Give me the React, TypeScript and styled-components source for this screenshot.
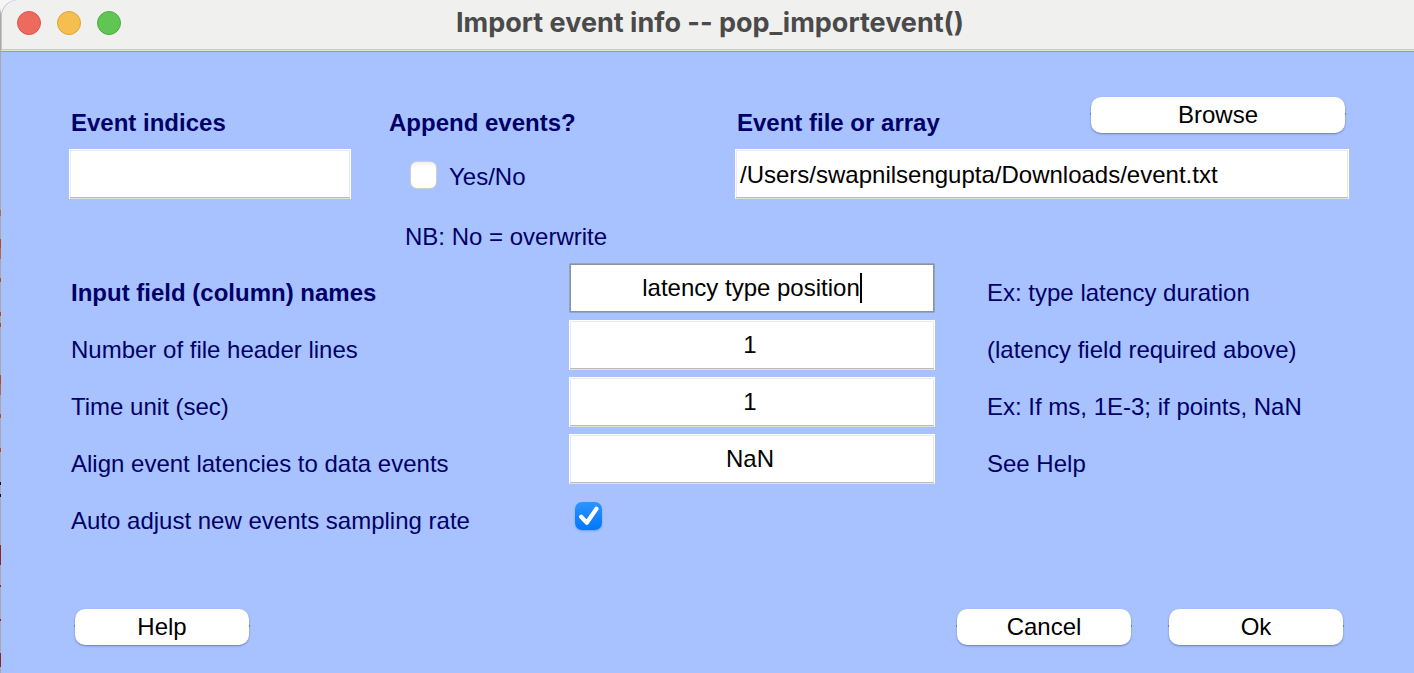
import React, { useState } from "react";
import styled, { createGlobalStyle, css } from "styled-components";

const navy = "#000066";

const GlobalStyle = createGlobalStyle`
  *, *::before, *::after { box-sizing: border-box; }
  body {
    margin: 0;
    background: #f6f6f6;
    font-family: "Liberation Sans", Arial, Helvetica, sans-serif;
    font-size: 24px;
    line-height: 28px;
  }
  input, button { font: inherit; color: #000; }
`;

const Desktop = styled.div`
  min-height: 100vh;
  display: flex;
  padding-left: 1px;
  background:
    linear-gradient(transparent 210px, #b3693f 210px 216px, transparent 216px 239px, #b84a10 239px 248px, #b3693f 248px 259px,
      transparent 259px 278px, #b84a10 278px 282px, transparent 282px 312px, #b84a10 312px 316px, transparent 316px 323px,
      #b84a10 323px 327px, transparent 327px 375px, #b84a10 375px 384px, #b3693f 384px 395px, transparent 395px 414px,
      #b84a10 414px 418px, transparent 418px 448px, #b84a10 448px 452px, transparent 452px 482px, #111 482px 485px,
      transparent 485px 494px, #111 494px 497px, transparent 497px 545px, #8f2424 545px 565px, transparent 565px 585px,
      #8f2424 585px 587px, transparent 587px 619px, #8f2424 619px 621px, transparent 621px 653px, #8f2424 653px 667px, transparent 667px)
      left top / 1px 100% no-repeat,
    linear-gradient(#f6f6f6 8px, #a9a9a9 14px) left top / 1px 100% no-repeat,
    #f6f6f6;
`;

const Window = styled.main`
  flex: 1;
  min-width: 0;
  display: flex;
  flex-direction: column;
  background: #a8c2ff;
  border-top-left-radius: 16px;
  overflow: hidden;
`;

const TitleBar = styled.header`
  display: grid;
  grid-template-columns: 1fr auto 1fr;
  align-items: center;
  height: 51px;
  padding: 0 11px 5px 16px;
  background: #f0f0ee;
  border-bottom: 1px solid #e4e4da;
  border-top-left-radius: 16px;
  box-shadow: inset 1px 0 #c4c4c4, inset 0 -1px #c8c8c6, 0 1px #8199d6;
`;

const Lights = styled.div`
  display: flex;
  gap: 16px;
`;

const Light = styled.button<{ $fill: string; $edge: string }>`
  width: 24px;
  height: 24px;
  padding: 0;
  border-radius: 50%;
  background: ${(p) => p.$fill};
  border: 1px solid ${(p) => p.$edge};
`;

const Title = styled.h1`
  margin: 0;
  font-family: Inter, "Open Sans", sans-serif;
  font-size: 27px;
  font-weight: 700;
  line-height: 32px;
  color: #4a4a4a;
`;

const Form = styled.form`
  flex: 1;
  display: flex;
  flex-direction: column;
  padding: 46px 65px 28px 68px;
  color: ${navy};
`;

const TopGrid = styled.section`
  display: grid;
  grid-template-columns: 282fr 308fr 614fr;
  column-gap: 38px;
`;

const Column = styled.div`
  min-width: 0;
`;

const ColumnHead = styled.div`
  display: flex;
  justify-content: space-between;
  align-items: flex-end;
  height: 40px;
  margin-bottom: 12px;
`;

const Heading = styled.label<{ $inset?: boolean }>`
  font-weight: 700;
  white-space: nowrap;
  padding-left: ${(p) => (p.$inset ? 2 : 0)}px;
`;

const PushButton = styled.button<{ $wide?: boolean }>`
  position: relative;
  width: ${(p) => (p.$wide ? 254 : 174)}px;
  height: 36px;
  padding: 0;
  border: 0;
  border-radius: 10px;
  background: #fff;
  box-shadow: 0 1px 2px rgba(40, 60, 130, 0.5);

  &::before, &::after {
    content: "";
    position: absolute;
    top: 16px;
    width: 1px;
    height: 2px;
    background: #6b7fb5;
  }
  &::before { left: -1px; }
  &::after { right: -1px; }
`;

const BrowseButton = styled(PushButton)`
  align-self: flex-start;
  margin-right: 4px;
`;

const fieldBox = css`
  width: 100%;
  min-width: 0;
  height: 50px;
  background: #fff;
  border: 1px solid #fff;
  border-bottom-color: #e2e0da;
  border-radius: 0;
  outline: none;
  box-shadow: inset 0 -1px #bcbcbc, inset 0 0 0 1px #ebebeb;
`;

const Field = styled.input<{ $center?: boolean }>`
  ${fieldBox}
  display: block;
  padding: ${(p) => (p.$center ? "0 8px 0 4px" : "2px 4px 0")};
  text-align: ${(p) => (p.$center ? "center" : "left")};
`;

const ActiveField = styled.div`
  ${fieldBox}
  display: flex;
  align-items: center;
  justify-content: center;
  border-color: #95a5bd;
  border-radius: 1px;
  box-shadow: inset 0 0 0 1px #8794a3;
`;

const GrowingInput = styled.input`
  field-sizing: content;
  height: 28px;
  padding: 0;
  border: 0;
  outline: none;
  background: transparent;
  caret-color: transparent;
`;

const Caret = styled.span`
  width: 2px;
  height: 30px;
  background: #000;
`;

const AppendRow = styled.div`
  display: flex;
  align-items: center;
  gap: 12px;
  height: 52px;
  padding-left: 21px;
`;

const OptionLabel = styled.label`
  padding-top: 4px;
`;

const Note = styled.p`
  margin: 22px 0 12px;
  padding-left: 16px;
  white-space: nowrap;
`;

const TickFrame = styled.span`
  position: relative;
  display: block;
  width: 27px;
  height: 28px;
  flex: none;

  svg {
    position: absolute;
    inset: 0;
    pointer-events: none;
  }
`;

const Tick = styled.input`
  appearance: none;
  display: block;
  width: 100%;
  height: 100%;
  margin: 0;
  border: 1px solid #cfcfd0;
  border-radius: 7px;
  background: linear-gradient(#f0f0f0, #fff 5px);

  &:checked {
    border-color: transparent;
    background: linear-gradient(#2e94ff, #0077ff) border-box;
    box-shadow: 0 1px 2px rgba(0, 80, 220, 0.3);
  }
`;

const Settings = styled.section`
  display: grid;
  grid-template-columns: 448fr 366fr 362fr;
  grid-auto-rows: 50px;
  align-items: center;
  column-gap: 52px;
  row-gap: 7px;
`;

const RowLabel = styled.label<{ $bold?: boolean }>`
  padding: 10px 0 0 2px;
  white-space: nowrap;
  font-weight: ${(p) => (p.$bold ? 700 : 400)};
`;

const Hint = styled.span`
  padding-top: 10px;
  white-space: nowrap;
`;

const TickCell = styled.div`
  padding-left: 6px;
`;

const Actions = styled.footer`
  display: flex;
  gap: 38px;
  margin-top: auto;
  padding: 0 6px;
`;

const Spacer = styled.div`
  flex: 1;
`;

function Checkbox({ id, initial }: { id: string; initial: boolean }) {
  const [on, setOn] = useState(initial);
  return (
    <TickFrame>
      <Tick id={id} type="checkbox" checked={on} onChange={() => setOn(!on)} />
      {on && (
        <svg width="27" height="28" viewBox="0 0 27 28" fill="none" aria-hidden="true">
          <path d="M6.2 14.8 11.8 20.8 21.4 6.8" stroke="#fff" strokeWidth="4.2" strokeLinecap="round" strokeLinejoin="round" />
        </svg>
      )}
    </TickFrame>
  );
}

const rows = [
  { id: "header", label: "Number of file header lines", value: "1", hint: "(latency field required above)" },
  { id: "unit", label: "Time unit (sec)", value: "1", hint: "Ex: If ms, 1E-3; if points, NaN" },
  { id: "align", label: "Align event latencies to data events", value: "NaN", hint: "See Help" },
];

export default function App() {
  return (
    <>
      <GlobalStyle />
      <Desktop>
        <Window>
          <TitleBar>
            <Lights>
              <Light aria-label="Close" $fill="#ed6a5e" $edge="#d9564b" />
              <Light aria-label="Minimize" $fill="#f5bf4f" $edge="#dba33c" />
              <Light aria-label="Zoom" $fill="#61c554" $edge="#4dab40" />
            </Lights>
            <Title>Import event info -- pop_importevent()</Title>
          </TitleBar>
          <Form onSubmit={(e) => e.preventDefault()}>
            <TopGrid>
              <Column>
                <ColumnHead>
                  <Heading htmlFor="indices" $inset>Event indices</Heading>
                </ColumnHead>
                <Field id="indices" type="text" />
              </Column>
              <Column>
                <ColumnHead>
                  <Heading htmlFor="append">Append events?</Heading>
                </ColumnHead>
                <AppendRow>
                  <Checkbox id="append" initial={false} />
                  <OptionLabel htmlFor="append">Yes/No</OptionLabel>
                </AppendRow>
                <Note>NB: No = overwrite</Note>
              </Column>
              <Column>
                <ColumnHead>
                  <Heading htmlFor="file" $inset>Event file or array</Heading>
                  <BrowseButton type="button" $wide>Browse</BrowseButton>
                </ColumnHead>
                <Field id="file" type="text" defaultValue="/Users/swapnilsengupta/Downloads/event.txt" />
              </Column>
            </TopGrid>
            <Settings>
              <RowLabel htmlFor="names" $bold>Input field (column) names</RowLabel>
              <ActiveField>
                <GrowingInput id="names" type="text" defaultValue="latency type position" />
                <Caret />
              </ActiveField>
              <Hint>Ex: type latency duration</Hint>
              {rows.map((r) => (
                <React.Fragment key={r.id}>
                  <RowLabel htmlFor={r.id}>{r.label}</RowLabel>
                  <Field id={r.id} type="text" defaultValue={r.value} $center />
                  <Hint>{r.hint}</Hint>
                </React.Fragment>
              ))}
              <RowLabel htmlFor="adjust">Auto adjust new events sampling rate</RowLabel>
              <TickCell>
                <Checkbox id="adjust" initial />
              </TickCell>
            </Settings>
            <Actions>
              <PushButton type="button">Help</PushButton>
              <Spacer />
              <PushButton type="button">Cancel</PushButton>
              <PushButton type="submit">Ok</PushButton>
            </Actions>
          </Form>
        </Window>
      </Desktop>
    </>
  );
}
